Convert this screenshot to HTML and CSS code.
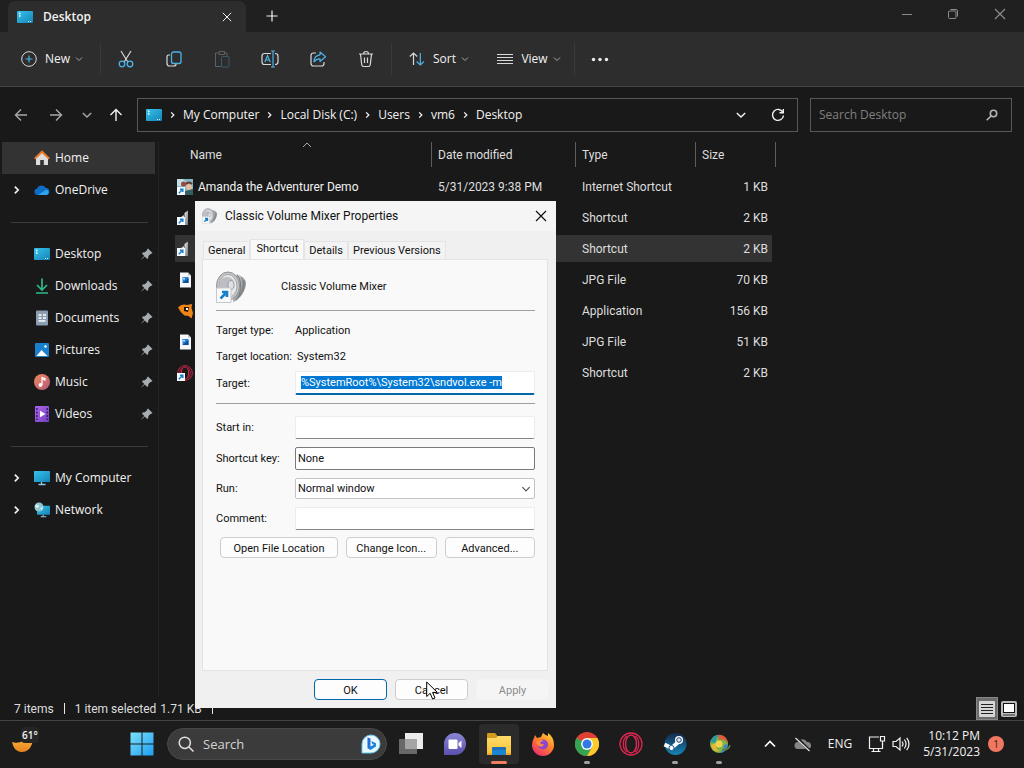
FILE: index.html
```html
<!DOCTYPE html>
<html lang="en">
<head>
<meta charset="utf-8">
<title>Desktop</title>
<link rel="stylesheet" href="styles.css">
</head>
<body>
<svg class="defs" aria-hidden="true">
  <defs>
    <linearGradient id="gScreen" x1="0" y1="0" x2="1" y2="1"><stop offset="0" stop-color="#35c3ee"/><stop offset="1" stop-color="#1583b5"/></linearGradient>
    <linearGradient id="gWin" x1="0" y1="0" x2="1" y2="1"><stop offset="0" stop-color="#7be3fc"/><stop offset="1" stop-color="#1e9cf0"/></linearGradient>
    <linearGradient id="gMusic" x1="0" y1="0" x2="1" y2="1"><stop offset="0" stop-color="#f0895c"/><stop offset="1" stop-color="#b5577d"/></linearGradient>
    <linearGradient id="gVideo" x1="0" y1="0" x2="1" y2="1"><stop offset="0" stop-color="#b165e8"/><stop offset="1" stop-color="#7440c4"/></linearGradient>
    <linearGradient id="gFolder" x1="0" y1="0" x2="0" y2="1"><stop offset="0" stop-color="#ffdb6b"/><stop offset="1" stop-color="#f8c234"/></linearGradient>
    <linearGradient id="gFire" x1="1" y1="0" x2="0.3" y2="1"><stop offset="0" stop-color="#ffe14a"/><stop offset=".45" stop-color="#ff8a26"/><stop offset="1" stop-color="#f02f6b"/></linearGradient>
    <linearGradient id="gSteam" x1="0" y1="0" x2="0" y2="1"><stop offset="0" stop-color="#142a4e"/><stop offset="1" stop-color="#1685b8"/></linearGradient>
    <linearGradient id="gMetal" x1="0" y1="0" x2="1" y2="1"><stop offset="0" stop-color="#f2f2f2"/><stop offset=".5" stop-color="#aaadb0"/><stop offset="1" stop-color="#77797c"/></linearGradient>
    <linearGradient id="gMoon" x1="0" y1="0" x2="0" y2="1"><stop offset="0" stop-color="#ffc54a"/><stop offset="1" stop-color="#e8821e"/></linearGradient>
    <linearGradient id="gBing" x1="0" y1="0" x2="1" y2="1"><stop offset="0" stop-color="#2a60d8"/><stop offset="1" stop-color="#1c94d8"/></linearGradient>
    <linearGradient id="gChat" x1="0" y1="0" x2="0" y2="1"><stop offset="0" stop-color="#8a86d4"/><stop offset="1" stop-color="#5b50ae"/></linearGradient>
  </defs>
  <symbol id="i-desktop" viewBox="0 0 16 16"><rect y="2" width="16" height="12" rx="1" fill="url(#gScreen)"/><path d="M2 4.500h1.500M2 7h1.500" stroke="#fff" stroke-width="1.400"/><path d="M11 12.500h1M13 12.500h1" stroke="#d8f4ff"/></symbol>
  <symbol id="i-down" viewBox="0 0 10 10"><path d="M2 3.500l3 3 3-3" fill="none" stroke="currentColor"/></symbol>
  <symbol id="i-right" viewBox="0 0 8 10"><path d="M2.500 2l3 3-3 3" fill="none" stroke="currentColor" stroke-width="1.500"/></symbol>
  <symbol id="i-arrow" viewBox="0 0 16 16"><path d="M14 8H2.500M8 2.500L2.500 8 8 13.500" fill="none" stroke="currentColor" stroke-width="1.400"/></symbol>
  <symbol id="i-x" viewBox="0 0 12 12"><path d="M1 1l10 10M11 1L1 11" fill="none" stroke="currentColor" stroke-width="1.200"/></symbol>
  <symbol id="i-pin" viewBox="0 0 12 12"><path d="M7 .5L11.500 5l-1 .8-.7-.1-2.400 2.400-.2 2-1 .8-2.400-2.400L.8 11.200.5 10.900l2.800-3L1 5.500l.8-1 2-.2L6.200 2l-.1-.7z" fill="#a9adb2"/></symbol>
  <symbol id="i-link" viewBox="0 0 8 8"><rect width="8" height="8" fill="#f5fbff"/><path d="M1.800 6.200L5 3M3 2.300h2.800v2.800" fill="none" stroke="#1b7fc9" stroke-width="1.500"/></symbol>
  <symbol id="i-bars" viewBox="0 0 16 16"><path d="M4 15V7l3-2v10z" fill="#d5d7d9"/><path d="M7.500 15V3l3.500-2.500V15z" fill="url(#gMetal)"/><use href="#i-link" x="0" y="7" width="8" height="8"/></symbol>
  <symbol id="i-jpg" viewBox="0 0 16 16"><path d="M3 .5h8l3 3v12H3z" fill="#f4f6f8"/><path d="M11 .5v3h3" fill="#bcc2c8"/><path d="M5.500 5h6v6h-6z" fill="#2684d8"/><path d="M5.500 11l6-5v5z" fill="#134c98"/><circle cx="7" cy="6.700" r=".9" fill="#d7f1ff"/></symbol>
  <symbol id="i-opera" viewBox="0 0 24 24"><g fill="none" stroke="#dc2850"><circle cx="12" cy="12" r="11" stroke-width="1.300"/><ellipse cx="12" cy="12" rx="5.500" ry="9" stroke-width="1.500"/><path d="M8 4c-5 3-5 13 0 16M16 4c5 3 5 13 0 16" stroke-width="1.200"/></g></symbol>
  <symbol id="i-pc" viewBox="0 0 16 16"><rect y="1" width="16" height="11" rx=".5" fill="url(#gScreen)"/><path d="M7.500 12v2M4.500 14.500h7" stroke="#8fc4e2" stroke-width="1.300"/></symbol>
  <symbol id="i-speaker" viewBox="0 0 32 32">
    <path d="M17 3c8 0 13 5 13 9 0 7-6 17-13 19z" fill="url(#gMetal)"/>
    <path d="M21 4c5 5 5 18-1 25M25 6c4 5 2 15-2 20M28 9c1 5 0 9-3 14" fill="none" stroke="#7d8083" stroke-width="1.100"/>
    <ellipse cx="12" cy="15" rx="11.500" ry="14" fill="#c4c6c8" stroke="#8d9093"/>
    <ellipse cx="12" cy="15" rx="9" ry="11.500" fill="#e6e7e8" stroke="#a6a9ac"/>
    <path d="M5 9c4-5 11-3 13 2l-5 3-3 11C3 23 2 14 5 9z" fill="#bdbdc4"/>
    <ellipse cx="15" cy="14" rx="3" ry="4.500" fill="#dedfe6" stroke="#9b9ca5"/>
    <path d="M.5 17h14.500v14.500H.5z" fill="#fafafa" stroke="#c7c7c7"/>
    <path d="M4.500 27.500l5-5M6 21h5v5" fill="none" stroke="#1780cd" stroke-width="2.600"/>
  </symbol>
</svg>

<div class="explorer">
  <header class="titlebar">
    <div class="tab">
      <svg class="i16"><use href="#i-desktop"/></svg>
      <span class="tab-name">Desktop</span>
      <button class="plain" aria-label="Close tab"><svg class="i10"><use href="#i-x"/></svg></button>
    </div>
    <button class="plain new-tab" aria-label="New tab"><svg class="i12" viewBox="0 0 12 12"><path d="M6 .5v11M.5 6h11" stroke="currentColor" stroke-width="1.200"/></svg></button>
    <div class="window-buttons">
      <button class="plain" aria-label="Minimize"><svg class="i10" viewBox="0 0 10 10"><path d="M0 5.500h10" stroke="currentColor"/></svg></button>
      <button class="plain" aria-label="Restore"><svg class="i10" viewBox="0 0 10 10" fill="none" stroke="currentColor"><rect x=".5" y="2" width="7.500" height="7.500" rx="1"/><path d="M2.500.5H8q1.500 0 1.500 1.500v5.500"/></svg></button>
      <button class="plain" aria-label="Close"><svg class="i12"><use href="#i-x"/></svg></button>
    </div>
  </header>

  <div class="toolbar">
    <button class="plain tool-text tool-new"><svg class="i16" viewBox="0 0 16 16" fill="none"><circle cx="8" cy="8" r="7.300" stroke="#d8d8d8"/><path d="M8 4.500v7M4.500 8h7" stroke="#4cb3e8" stroke-width="1.200"/></svg>New<svg class="i10 dim"><use href="#i-down"/></svg></button>
    <span class="divider"></span>
    <button class="plain tool" aria-label="Cut"><svg class="i18" viewBox="0 0 18 18" fill="none"><path d="M4 1l6.800 11M14 1L7.200 12" stroke="#d8d8d8" stroke-width="1.200"/><circle cx="5" cy="14" r="2.800" stroke="#4cb3e8" stroke-width="1.300"/><circle cx="13" cy="14" r="2.800" stroke="#4cb3e8" stroke-width="1.300"/></svg></button>
    <button class="plain tool" aria-label="Copy"><svg class="i18" viewBox="0 0 18 18" fill="none"><path d="M5 5H4Q2 5 2 7v6.500Q2 16 4.500 16H9q2 0 2-2" stroke="#d8d8d8" stroke-width="1.200"/><rect x="6.500" y="2" width="9.500" height="11.500" rx="2" stroke="#4cb3e8" stroke-width="1.300"/></svg></button>
    <button class="plain tool" aria-label="Paste" disabled><svg class="i18" viewBox="0 0 18 18" fill="none"><path d="M6 3H2.500v13.500H8M11.500 3H14v3M6 1.500h5.500v3H6z" stroke="#5e6163"/><rect x="8.500" y="6.500" width="7.500" height="10.500" rx="1" stroke="#3b5a6b"/></svg></button>
    <button class="plain tool" aria-label="Rename"><svg class="i18" viewBox="0 0 18 18" fill="none"><path d="M10 3.500H3.500Q1 3.500 1 6v6q0 2.500 2.500 2.500H10M14 3.500q3 0 3 2.500v6q0 2.500-3 2.500" stroke="#d8d8d8" stroke-width="1.200"/><path d="M12 1v16M10 1h4M10 17h4M3.800 12l2.700-6.500L9.200 12M5 10h3.200" stroke="#4cb3e8" stroke-width="1.200"/></svg></button>
    <button class="plain tool" aria-label="Share"><svg class="i18" viewBox="0 0 18 18" fill="none"><path d="M7 3H4.500Q2 3 2 5.500v8Q2 16 4.500 16h8q2.500 0 2.500-2.500V12" stroke="#d8d8d8" stroke-width="1.200"/><path d="M11 2l5.500 4.800L11 11.500V8.800q-3.800 0-6 3Q5 5.500 11 4.800z" stroke="#4cb3e8" stroke-width="1.200" stroke-linejoin="round"/></svg></button>
    <button class="plain tool" aria-label="Delete"><svg class="i18" viewBox="0 0 18 18" fill="none" stroke="#d8d8d8" stroke-width="1.200"><path d="M2 4h14M3.500 4l1.200 10.500Q5 16.500 6.500 16.500h5q1.500 0 1.800-2L14.500 4M6.500 4q0-2.500 2.500-2.500T11.500 4M7.500 7.500v5.500M10.500 7.500v5.500"/></svg></button>
    <span class="divider"></span>
    <button class="plain tool-text tool-menu"><svg class="i16" viewBox="0 0 16 16" fill="none"><path d="M4.500 14V2M.8 5.500L4.500 2l3.700 3.500" stroke="#d8d8d8" stroke-width="1.200"/><path d="M11.300 2v12M7.600 10.500l3.700 3.500 3.700-3.500" stroke="#4cb3e8" stroke-width="1.200"/></svg>Sort<svg class="i10 dim"><use href="#i-down"/></svg></button>
    <button class="plain tool-text tool-menu"><svg class="i16" viewBox="0 0 16 16"><path d="M0 3.500h16M0 6.500h16M0 9.500h16M0 12.500h16" stroke="#d8d8d8"/></svg>View<svg class="i10 dim"><use href="#i-down"/></svg></button>
    <span class="divider"></span>
    <button class="plain tool" aria-label="See more"><svg class="i18" viewBox="0 0 18 18" fill="#eee"><circle cx="2.500" cy="9.500" r="1.700"/><circle cx="9" cy="9.500" r="1.700"/><circle cx="15.500" cy="9.500" r="1.700"/></svg></button>
  </div>

  <nav class="addressbar" aria-label="Address">
    <div class="history">
      <button class="plain dim" aria-label="Back"><svg class="i16"><use href="#i-arrow"/></svg></button>
      <button class="plain dim" aria-label="Forward"><svg class="i16 flip"><use href="#i-arrow"/></svg></button>
      <button class="plain dim" aria-label="Recent"><svg class="i14"><use href="#i-down"/></svg></button>
      <button class="plain" aria-label="Up"><svg class="i16 turn"><use href="#i-arrow"/></svg></button>
    </div>
    <div class="path">
      <svg class="i16"><use href="#i-desktop"/></svg>
      <svg class="crumb"><use href="#i-right"/></svg>
      <a href="#">My Computer</a><svg class="crumb"><use href="#i-right"/></svg>
      <a href="#">Local Disk (C:)</a><svg class="crumb"><use href="#i-right"/></svg>
      <a href="#">Users</a><svg class="crumb"><use href="#i-right"/></svg>
      <a href="#">vm6</a><svg class="crumb"><use href="#i-right"/></svg>
      <a href="#">Desktop</a>
      <button class="plain path-drop" aria-label="Previous locations"><svg class="i14"><use href="#i-down"/></svg></button>
      <button class="plain" aria-label="Refresh"><svg class="i14" viewBox="0 0 14 14" fill="none" stroke="currentColor" stroke-width="1.400"><path d="M12 4.500A5.500 5.500 0 1 0 12.500 7.500M12.300 1v3.800H8.500"/></svg></button>
    </div>
    <div class="find">
      <input type="search" placeholder="Search Desktop" aria-label="Search Desktop">
      <svg class="i12" viewBox="0 0 12 12" fill="none" stroke="#b4b4b4" stroke-width="1.600"><circle cx="7.500" cy="4.500" r="3.200"/><path d="M5 7L.7 11.300"/></svg>
    </div>
  </nav>

  <main class="content">
    <nav class="sidebar" aria-label="Folders">
      <a class="place current" href="#"><span class="twist"></span><svg class="i16" viewBox="0 0 16 16"><path d="M2 8l6-6 6 6v7H9.800v-5H6.200v5H2z" fill="#dcdcdc"/><path d="M.7 8.800L8 1.700l7.300 7.100" fill="none" stroke="#e8792c" stroke-width="2"/></svg>Home</a>
      <a class="place" href="#"><svg class="twist"><use href="#i-right"/></svg><svg class="i16" viewBox="0 0 16 16"><path d="M3.500 13A3.300 3.300 0 0 1 3 6.500 5 5 0 0 1 12 6a3.600 3.600 0 0 1 1 7z" fill="#0f6cc4"/><path d="M4 13l8.500-5.500A3 3 0 0 1 13 13z" fill="#2ca4ee"/></svg>OneDrive</a>
      <hr>
      <a class="place" href="#"><span class="twist"></span><svg class="i16"><use href="#i-desktop"/></svg>Desktop<svg class="pin"><use href="#i-pin"/></svg></a>
      <a class="place" href="#"><span class="twist"></span><svg class="i16" viewBox="0 0 16 16" fill="none" stroke="#2fb98a" stroke-width="1.700"><path d="M8 .5v11M3 7l5 5 5-5M2 15h12"/></svg>Downloads<svg class="pin"><use href="#i-pin"/></svg></a>
      <a class="place" href="#"><span class="twist"></span><svg class="i16" viewBox="0 0 16 16"><rect x="2" y=".5" width="12" height="15" rx="1" fill="#8b9db0"/><path d="M4.500 5h3M4.500 8h3M4.500 11h7M9 5h3M9 8h3" stroke="#fff" stroke-width="1.500"/></svg>Documents<svg class="pin"><use href="#i-pin"/></svg></a>
      <a class="place" href="#"><span class="twist"></span><svg class="i16" viewBox="0 0 16 16"><rect x="1" y="1" width="14" height="14" rx="1" fill="#1980cc"/><path d="M2.500 14l5-6 6 6z" fill="#fff"/><circle cx="11.500" cy="4.500" r="1.200" fill="#fff"/></svg>Pictures<svg class="pin"><use href="#i-pin"/></svg></a>
      <a class="place" href="#"><span class="twist"></span><svg class="i16" viewBox="0 0 16 16"><circle cx="8" cy="8" r="8" fill="url(#gMusic)"/><path d="M8 11V3.500l3 1v1.500L8.500 5" fill="none" stroke="#fff" stroke-width="1.200"/><circle cx="6.500" cy="11" r="1.900" fill="#fff"/></svg>Music<svg class="pin"><use href="#i-pin"/></svg></a>
      <a class="place" href="#"><span class="twist"></span><svg class="i16" viewBox="0 0 16 16"><rect x="1" width="14" height="16" rx="1" fill="url(#gVideo)"/><path d="M2.800 2v12M13.200 2v12" stroke="#3d1d78" stroke-width="1.600" stroke-dasharray="2 1.500"/><path d="M6 4.700L11.500 8 6 11.300z" fill="#fff"/></svg>Videos<svg class="pin"><use href="#i-pin"/></svg></a>
      <hr>
      <a class="place" href="#"><svg class="twist"><use href="#i-right"/></svg><svg class="i16"><use href="#i-pc"/></svg>My Computer</a>
      <a class="place" href="#"><svg class="twist"><use href="#i-right"/></svg><svg class="i16" viewBox="0 0 16 16"><use href="#i-pc" x="3" y="3" width="13" height="13"/><circle cx="5" cy="5" r="4.500" fill="#8cc5d4"/><path d="M2 2.500l3 1L4 6 1 5zM6 6l3-1-1 3z" fill="#dff5ee"/></svg>Network</a>
    </nav>

    <div class="files">
      <table>
        <colgroup><col class="c-name"><col class="c-date"><col class="c-type"><col class="c-size"></colgroup>
        <thead><tr><th class="first"><div class="th-in">Name<svg class="sorted" viewBox="0 0 10 6"><path d="M1 5l4-4 4 4" fill="none" stroke="#aaa"/></svg></div></th><th>Date modified</th><th>Type</th><th>Size</th></tr></thead>
        <tbody>
          <tr><td><div class="file"><svg class="i16" viewBox="0 0 16 16"><rect width="16" height="16" fill="#82b5c5"/><path d="M0 0h6l3 3-5 4H0z" fill="#c4dce3"/><circle cx="6.500" cy="5" r="2.500" fill="#9b4b3c"/><circle cx="12" cy="8" r="3" fill="#e6bda2"/><path d="M8 12l8-2v6H8z" fill="#355e63"/><path d="M9 5q3-3 6 0" stroke="#62382c" stroke-width="2" fill="none"/><use href="#i-link" y="8" width="8" height="8"/></svg>Amanda the Adventurer Demo</div></td><td>5/31/2023 9:38 PM</td><td>Internet Shortcut</td><td class="num">1 KB</td></tr>
          <tr><td><svg class="i16"><use href="#i-bars"/></svg></td><td></td><td>Shortcut</td><td class="num">2 KB</td></tr>
          <tr class="selected"><td><svg class="i16"><use href="#i-bars"/></svg></td><td></td><td>Shortcut</td><td class="num">2 KB</td></tr>
          <tr><td><svg class="i16"><use href="#i-jpg"/></svg></td><td></td><td>JPG File</td><td class="num">70 KB</td></tr>
          <tr><td><svg class="i16" viewBox="0 0 16 16"><path d="M1 4.500q4-4.500 9-2.500l5-1-.5 4 1.500 5-1.500 5.500-3-2.500-4-.5Q3 9 1 4.500z" fill="#ef8418"/><path d="M7 4h5l-1 5-4-1z" fill="#23120a"/><path d="M9 5h2v2H9z" fill="#fff"/></svg></td><td></td><td>Application</td><td class="num">156 KB</td></tr>
          <tr><td><svg class="i16"><use href="#i-jpg"/></svg></td><td></td><td>JPG File</td><td class="num">51 KB</td></tr>
          <tr><td><svg class="i16" viewBox="0 0 16 16"><use href="#i-opera" width="16" height="16"/><use href="#i-link" y="8" width="8" height="8"/></svg></td><td></td><td>Shortcut</td><td class="num">2 KB</td></tr>
        </tbody>
      </table>
    </div>
  </main>

  <footer class="status">
    <span>7 items</span><span class="bar"></span><span class="picked">1 item selected<span>1.71 KB</span></span><span class="bar"></span>
    <div class="views">
      <button class="plain view on" aria-label="Details view"><svg class="i16" viewBox="0 0 16 16"><rect width="16" height="16" rx="1" fill="#d6d6d6"/><path d="M2 3.500h12M2 6.500h12M2 9.500h12M2 12.500h12" stroke="#222"/></svg></button>
      <button class="plain view" aria-label="Thumbnail view"><svg class="i16" viewBox="0 0 16 16"><rect width="16" height="16" rx="2" fill="#bcbcbc"/><rect x="2.500" y="2.500" width="11" height="9" fill="#fff" stroke="#111"/><path d="M2 14h12" stroke="#333"/></svg></button>
    </div>
  </footer>
</div>

<section class="dialog" role="dialog" aria-labelledby="dlg-title">
  <header class="dlg-head"><svg class="i16"><use href="#i-speaker"/></svg><h1 id="dlg-title">Classic Volume Mixer Properties</h1><button class="plain" aria-label="Close dialog"><svg class="i12"><use href="#i-x"/></svg></button></header>
  <div class="dlg-body">
    <div class="tabs" role="tablist">
      <button role="tab">General</button><button role="tab" class="active" aria-selected="true">Shortcut</button><button role="tab">Details</button><button role="tab">Previous Versions</button>
    </div>
    <form class="sheet">
      <div class="ident"><svg class="i32"><use href="#i-speaker"/></svg><span>Classic Volume Mixer</span></div>
      <hr>
      <div class="facts">
        <div class="fact"><span>Target type:</span><span>Application</span></div>
        <div class="fact"><span>Target location:</span><span class="inset">System32</span></div>
        <div class="field"><label for="target">Target:</label><input id="target" class="target" type="text" value="%SystemRoot%\System32\sndvol.exe -m" spellcheck="false"></div>
      </div>
      <hr>
      <div class="fields">
        <div class="field"><label for="start">Start in:</label><input id="start" type="text"></div>
        <div class="field"><label for="key">Shortcut key:</label><input id="key" class="boxed" type="text" value="None"></div>
        <div class="field"><label for="run">Run:</label><div class="pick"><select id="run"><option>Normal window</option></select><svg class="i12"><use href="#i-down"/></svg></div></div>
        <div class="field"><label for="comment">Comment:</label><input id="comment" type="text"></div>
      </div>
      <div class="actions"><button type="button" class="btn wide">Open File Location</button><button type="button" class="btn">Change Icon...</button><button type="button" class="btn">Advanced...</button></div>
    </form>
  </div>
  <footer class="dlg-foot"><button class="btn default">OK</button><button class="btn">Cancel</button><button class="btn" disabled>Apply</button></footer>
  <svg class="pointer" viewBox="0 0 12 19"><path d="M.7 1v14.500l3.500-3.200 2.400 5.700 2.400-1-2.400-5.600h4.700z" fill="#fff" stroke="#000"/></svg>
</section>

<footer class="taskbar">
  <button class="plain weather" aria-label="Weather"><svg viewBox="0 0 24 24"><path d="M1 11q6 2 11-1 5-3 6-8 5 4 3 11-3 8-10 8Q3 21 1 11z" fill="url(#gMoon)"/></svg><span>61°</span></button>
  <div class="dock">
    <button class="plain start" aria-label="Start"><svg class="i24" viewBox="0 0 24 24" fill="url(#gWin)"><path d="M.5.5h11v11H.5zM12.500.5h11v11h-11zM.5 12.500h11v11H.5zM12.500 12.500h11v11h-11z"/></svg></button>
    <div class="searchbox">
      <svg class="i16" viewBox="0 0 16 16" fill="none" stroke="#e2e2e2" stroke-width="1.500"><circle cx="6.800" cy="6.800" r="5.600"/><path d="M11 11l4.500 4.500"/></svg>
      <input type="text" placeholder="Search" aria-label="Search">
      <svg class="i20" viewBox="0 0 20 20"><path d="M1 19V10a9 9 0 1 1 9 9z" fill="#e9f8ff" stroke="#69c8f2"/><path d="M6.500 3.500l3 1v8l3.500-1.800-1.700-.8L10.200 7l4.800 2.200v3.300l-5.500 3.500-3-1.800z" fill="url(#gBing)"/></svg>
    </div>
    <button class="plain app" aria-label="Task view"><svg class="i24" viewBox="0 0 24 24"><rect x="6" y="1" width="18" height="16" fill="#ececec"/><rect y="7" width="18" height="15" fill="#686868"/><path d="M6 7h12v10H6z" fill="#a4a4a4"/></svg></button>
    <button class="plain app" aria-label="Chat"><svg class="i24" viewBox="0 0 24 24"><path d="M1 23V12A11 11 0 1 1 12 23z" fill="url(#gChat)"/><rect x="5.500" y="7.500" width="9" height="9.500" rx="1" fill="#fff"/><path d="M15.500 11l3-2.500v7.500l-3-2.500z" fill="#fff"/></svg></button>
    <button class="plain app open" aria-label="File Explorer"><svg class="i24" viewBox="0 0 24 24"><path d="M0 2q0-1 1-1h7l2.500 3H24v18H0z" fill="#d19b1d"/><path d="M0 6h9l2-2h13v18H0z" fill="url(#gFolder)"/><path d="M0 21h24v2H0z" fill="#e6ab28"/><path d="M5 23v-7q0-1 1-1h12q1 0 1 1v7z" fill="#1f6db6"/><path d="M5 18h14v5H5z" fill="#1a85d0"/></svg></button>
    <button class="plain app" aria-label="Firefox"><svg class="i24" viewBox="0 0 24 24"><path d="M3 6l1-3 2 3 4-1 2-4q3 3 5 3V1q6 4 6 12a11 11 0 0 1-22 0q0-4 2-7z" fill="url(#gFire)"/><circle cx="12" cy="12.500" r="5" fill="#8d45d3"/><path d="M5 9q4-2 8 0-3 0-4 2 1 2 4 1-1 4-5 2-3-2-3-5z" fill="#ff8b30"/></svg></button>
    <button class="plain app run" aria-label="Chrome"><svg class="i24" viewBox="0 0 24 24"><circle cx="12" cy="12" r="12" fill="#e04033"/><path d="M1.600 6A12 12 0 0 0 12 24l5.200-9z" fill="#32a452"/><path d="M12 24A12 12 0 0 0 22.400 6H12l5.200 9z" fill="#fbcb2c"/><circle cx="12" cy="12" r="5.900" fill="#fff"/><circle cx="12" cy="12" r="4.500" fill="#3478e5"/></svg></button>
    <button class="plain app" aria-label="Opera GX"><svg class="i24"><use href="#i-opera"/></svg></button>
    <button class="plain app run" aria-label="Steam"><svg class="i24" viewBox="0 0 24 24"><circle cx="12.500" cy="12" r="11" fill="url(#gSteam)"/><path d="M1.500 12.500L8.500 16l7-6" fill="none" stroke="#fff" stroke-width="3.800"/><circle cx="16" cy="8" r="4" fill="#fff"/><circle cx="16" cy="8" r="2.300" fill="#dce8f0" stroke="#24466c"/><circle cx="8.500" cy="16" r="2.600" fill="#fff" stroke="#1b5181"/></svg></button>
    <button class="plain app run" aria-label="Paint tool"><svg class="i24" viewBox="0 0 24 24"><circle cx="12" cy="12" r="9" fill="#7db648"/><path d="M3 10q3-9 12-7-6 0-6 8z" fill="#2c9a9c"/><path d="M11 3q9-1 10 9-3-6-9-4z" fill="#e05a3c"/><path d="M21 12q-1 9-9 9 5-2 5-8z" fill="#3d87c8"/><path d="M4 13q2 8 9 6-5-1-4-8z" fill="#eeb536"/><circle cx="12" cy="12" r="3.500" fill="#f1d251"/><path d="M15 18q7 0 8-5" fill="none" stroke="#5e8040" stroke-width="1.500"/></svg></button>
  </div>
  <div class="tray">
    <button class="plain" aria-label="Hidden icons"><svg class="i12" viewBox="0 0 12 12"><path d="M1 8.500l5-5 5 5" fill="none" stroke="#fff" stroke-width="1.700"/></svg></button>
    <button class="plain" aria-label="OneDrive"><svg class="i18" viewBox="0 0 18 18"><path d="M4 14a3.500 3.500 0 0 1 0-7 5 5 0 0 1 9 0 3.500 3.500 0 0 1 1 7z" fill="#858585"/><path d="M2 2l14 14" stroke="#1c1c1c" stroke-width="3"/><path d="M1.500 3l14 13" stroke="#e4e4e4" stroke-width="1.200"/></svg></button>
    <button class="plain lang">ENG</button>
    <button class="plain sys" aria-label="Network and volume"><svg class="i18" viewBox="0 0 18 18" fill="none" stroke="#f2f2f2" stroke-width="1.200"><path d="M11 2H1.500v11.500h13V8.500M5.500 13.500v3M10.500 13.500v3M3.500 16.500h9"/><path d="M12.500 1.500h4v4.500h-4zM14.500 6v4"/></svg><svg class="i18" viewBox="0 0 18 18" fill="none" stroke="#f2f2f2" stroke-width="1.200"><path d="M1 6.500h3L8 3v12l-4-3.500H1zM10 6.500q2 2.500 0 5M12.300 4.500q3.500 4.500 0 9M14.700 2.800q4.600 6.200 0 12.400"/></svg></button>
    <button class="plain clock"><span>10:12 PM</span><span>5/31/2023</span></button>
    <span class="badge">1</span>
  </div>
</footer>
<script src="page.js"></script>
</body>
</html>
```
FILE: page.js
```js
const target = document.getElementById("target");
target.focus();
target.select();
```
FILE: styles.css
```css
* { box-sizing: border-box; }
body {
  margin: 0;
  height: 100vh;
  display: flex;
  flex-direction: column;
  background: #191919;
  color: #f2f2f2;
  font: 12px/16px "Open Sans", "Noto Sans", sans-serif;
  overflow: hidden;
}
button, input, select { font: inherit; color: inherit; margin: 0; }
a { color: inherit; text-decoration: none; }
svg { flex: none; display: block; }
.defs { position: absolute; width: 0; height: 0; }
.i10 { width: 10px; height: 10px; }
.i12 { width: 12px; height: 12px; }
.i14 { width: 14px; height: 14px; }
.i16 { width: 16px; height: 16px; }
.i18 { width: 18px; height: 18px; }
.i20 { width: 20px; height: 20px; }
.i24 { width: 24px; height: 24px; }
.i32 { width: 32px; height: 32px; }
.plain {
  display: flex;
  align-items: center;
  justify-content: center;
  padding: 0;
  border: 0;
  background: none;
}
.dim { color: #a8a8a8; }

/* Explorer window */
.explorer { flex: 1; min-height: 0; display: flex; flex-direction: column; }
.titlebar { display: flex; height: 32px; background: #202020; padding-left: 8px; }
.tab {
  display: flex;
  align-items: center;
  gap: 10px;
  width: 238px;
  margin-top: 1px;
  padding: 0 14px 0 9px;
  border-radius: 7px 7px 0 0;
  background: #2d2d2d;
}
.tab-name { flex: 1; font-weight: 600; }
.new-tab { width: 52px; }
.window-buttons { display: flex; margin-left: auto; color: #8c8c8c; }
.window-buttons .plain { width: 46px; height: 28px; }
.window-buttons .plain:last-child { width: 48px; }

.toolbar {
  display: flex;
  align-items: center;
  height: 55px;
  background: #2d2d2d;
  border-bottom: 1px solid #454545;
}
.tool { width: 48px; height: 32px; }
.tool-text { gap: 8px; height: 32px; font-weight: 500; }
.tool-text .dim { margin-left: -4px; }
.tool-new { width: 99px; padding-left: 6px; }
.tool-menu { width: 90px; padding-left: 3px; }
.divider { width: 1px; height: 32px; margin: 0 1px; background: #3a3a3a; }

.addressbar { display: flex; align-items: center; height: 55px; padding-right: 12px; }
.history { display: grid; grid-template-columns: 34px 36px 26px 32px; width: 137px; padding-left: 4px; }
.flip { transform: scaleX(-1); }
.turn { transform: rotate(90deg); }
.path {
  flex: 1;
  display: flex;
  align-items: center;
  gap: 7px;
  height: 34px;
  padding: 0 12px 0 8px;
  border: 1px solid #585858;
}
.crumb { width: 7px; height: 10px; }
.path-drop { margin: 0 16px 0 auto; }
.find {
  display: flex;
  align-items: center;
  width: 202px;
  height: 34px;
  margin-left: 12px;
  padding: 0 13px 0 8px;
  border: 1px solid #585858;
}
.find input { flex: 1; min-width: 0; padding: 0; border: 0; background: none; outline: 0; }
.find input::placeholder { color: #808080; }

.content { flex: 1; min-height: 0; display: flex; }
.sidebar { width: 159px; padding-left: 2px; border-right: 1px solid #242424; }
.place { display: flex; align-items: center; gap: 5px; height: 32px; width: 153px; padding: 0 2px 0 10px; }
.current { background: #333; }
.twist { width: 9px; height: 12px; margin-right: 8px; }
.pin { width: 12px; height: 12px; margin-left: auto; }
.sidebar hr { height: 1px; margin: 16px 10px 15px 9px; border: 0; background: #3c3c3c; }

.files { flex: 1; padding-left: 16px; font-family: Roboto, "Open Sans", sans-serif; }
table { border-spacing: 0; table-layout: fixed; width: 601px; }
.c-name { width: 257px; }
.c-date { width: 144px; }
.c-type { width: 120px; }
.c-size { width: 80px; }
th {
  height: 29px;
  padding: 0 0 3px 6px;
  font-weight: 400;
  text-align: left;
  color: #dedede;
  background: linear-gradient(#5c5c5c, #5c5c5c) right top / 1px 25px no-repeat;
}
.first { padding-left: 15px; }
.th-in { display: flex; align-items: flex-start; }
.sorted { width: 10px; height: 6px; margin: -5px 0 0 80px; }
td {
  height: 31px;
  padding: 0 6px;
  border: solid transparent;
  border-width: 2px 0;
  background-clip: padding-box;
  color: #dedede;
}
td:first-child { padding: 0 2px; }
.file { display: flex; align-items: center; gap: 5px; color: #f2f2f2; }
.num { text-align: right; padding-right: 4px; border-right-width: 4px; }
.selected td { background-color: #333; }

.status { display: flex; align-items: center; gap: 10px; height: 23px; padding-left: 14px; color: #dedede; font-family: Roboto, "Open Sans", sans-serif; }
.picked { display: flex; gap: 4px; }
.bar { width: 1px; height: 11px; background: #e8e8e8; }
.views { display: flex; align-items: center; margin-left: auto; padding-right: 4px; }
.view { width: 22px; height: 23px; }
.on { background: #6c6c6c; border: 1px solid #888; }

/* Properties dialog */
.dialog {
  position: absolute;
  left: 195px;
  top: 201px;
  width: 361px;
  height: 507px;
  display: flex;
  flex-direction: column;
  background: #f0f0f0;
  color: #111;
  font: 11px/15px Roboto, "Open Sans", sans-serif;
}
.dlg-head { display: flex; align-items: center; gap: 7px; height: 30px; padding: 0 9px 0 7px; background: #f5f5f5; }
.dlg-head h1 { flex: 1; margin: 0; font-size: 12px; font-weight: 400; }
.dlg-body { flex: 1; display: flex; flex-direction: column; padding: 8px 8px 0 7px; }
.tabs { display: flex; align-items: flex-end; height: 20px; padding-left: 1px; }
.tabs button {
  height: 18px;
  padding: 0 4px;
  border: 1px solid #e4e4e4;
  border-bottom: 0;
  background: #f3f3f3;
}
.tabs .active { height: 20px; padding: 0 5px 2px; background: #f9f9f9; }
.sheet { flex: 1; padding: 10px 12px 0 13px; border: 1px solid #e4e4e4; background: #f9f9f9; }
.sheet hr { height: 1px; margin: 0; border: 0; background: #a0a0a0; }
.ident { display: flex; align-items: center; gap: 33px; height: 33px; margin-bottom: 7px; }
.facts { padding: 6px 0 8px; }
.fact { display: grid; grid-template-columns: 79px 1fr; align-items: center; height: 26px; white-space: nowrap; }
.inset { padding-left: 2px; }
.field { display: grid; grid-template-columns: 79px 1fr; align-items: center; }
.field input, .field select {
  width: 100%;
  height: 23px;
  padding: 0 2px;
  border: 1px solid #ececec;
  border-bottom-color: #868686;
  border-radius: 2px;
  background: #fff;
  outline: 0;
}
.facts .field { padding-top: 2px; }
.field .target { height: 24px; padding-left: 5px; border-bottom: 2px solid #0067a8; caret-color: transparent; }
.target::selection { background: #0078d4; color: #fff; }
.field .boxed { border-color: #7a7a7a; }
.fields { display: grid; gap: 8px; padding-top: 12px; }
.pick { display: grid; align-items: center; }
.pick select, .pick svg { grid-area: 1 / 1; }
.pick svg { justify-self: end; margin-right: 3px; color: #555; pointer-events: none; }
.pick select { height: 21px; appearance: none; border-color: #c4c4c4; }
.actions { display: flex; gap: 8px; padding: 7px 0 0 4px; }
.btn { height: 21px; padding: 1px 0 0; border: 1px solid #cdcdcd; border-radius: 4px; background: #fdfdfd; }
.actions .btn { flex: 1; }
.actions .wide { flex: 0 0 118px; }
.dlg-foot { display: flex; justify-content: flex-end; gap: 8px; padding: 8px 7px; }
.dlg-foot .btn { width: 73px; }
.dlg-foot .default { border-color: #0067a8; }
.btn:disabled { border-color: #f3f3f3; background: #f5f5f5; color: #8c8c8c; }
.pointer { position: absolute; left: 231px; top: 480px; width: 12px; height: 19px; }

/* Taskbar */
.taskbar { display: flex; height: 48px; padding-bottom: 1px; border-top: 1px solid #444; background: #1c1c1c; }
.weather { width: 50px; margin-right: 72px; font-size: 10px; font-weight: 600; position: relative; }
.weather svg { width: 24px; height: 24px; margin-top: -3px; margin-right: 5px; }
.weather span { position: absolute; left: 21px; top: 6px; padding: 0 1px; background: #252525; border-radius: 4px; }
.dock { display: flex; align-items: center; }
.start { width: 40px; height: 40px; }
.searchbox {
  display: flex;
  align-items: center;
  gap: 9px;
  width: 220px;
  height: 32px;
  margin: 0 2px 0 5px;
  padding: 0 5px 0 10px;
  border-radius: 16px;
  border: 1px solid #484848;
  background: #3b3b3b;
}
.searchbox input { flex: 1; min-width: 0; border: 0; padding: 0; background: none; outline: 0; font-size: 13px; }
.searchbox input::placeholder { color: #d4d4d4; }
.app { position: relative; width: 40px; height: 40px; margin: 0 2px; border-radius: 4px; }
.open { background: #2b2b2b; }
.open::after, .run::after {
  content: "";
  position: absolute;
  bottom: 0;
  width: 6px;
  height: 3px;
  border-radius: 2px;
  background: #a0a0a0;
}
.open::after { width: 16px; background: #ee8061; }
.tray { display: flex; align-items: center; gap: 9px; margin-left: auto; padding-right: 20px; }
.tray .plain { min-width: 24px; height: 40px; }
.tray .lang { margin: 0 7px 0 4px; }
.tray .sys { gap: 6px; margin-right: 4px; }
.tray .clock { flex-direction: column; align-items: flex-end; justify-content: center; margin-right: -1px; }
.badge { width: 16px; height: 16px; border-radius: 50%; background: #f07860; color: #3c1c16; font-size: 10px; text-align: center; }
```
